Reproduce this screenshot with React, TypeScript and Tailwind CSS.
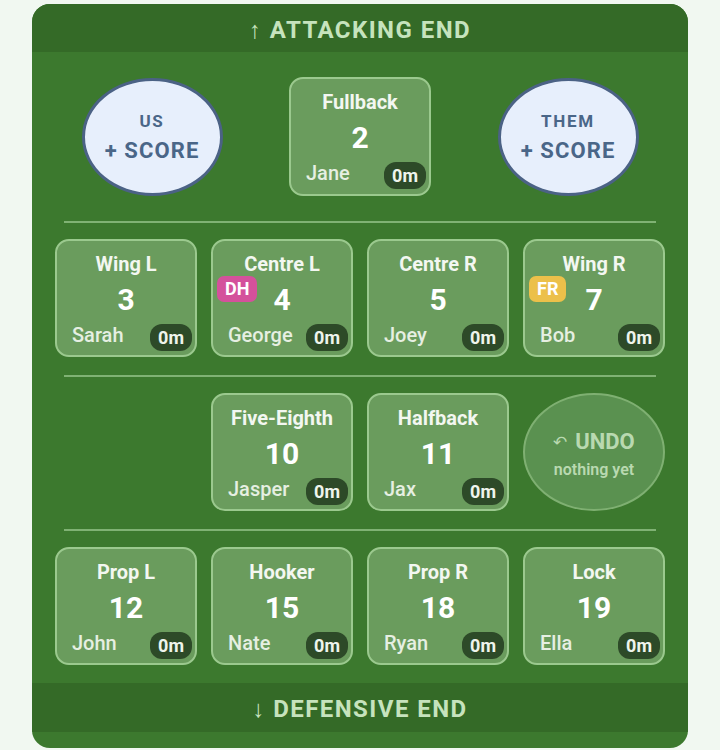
import React from "react";

type P = { title: string; num: number; name: string; tag?: "DH" | "FR" };

function Badge() {
  return (
    <div className="rounded-[12px] bg-[#2d4a28] px-[8px] text-[18px] font-bold leading-[27px] text-[#eef4ec]">0m</div>
  );
}

function Card({ title, num, name, tag }: P) {
  return (
    <div className="relative flex h-[118px] w-[142px] flex-col items-center rounded-[14px] border-2 border-[#9bc98e] bg-[#6a9c5d]">
      <div className="mt-[10px] text-[20px] font-bold leading-[26px] text-[#f3f7f1]">{title}</div>
      <div className="mt-[6px] text-[30px] font-bold leading-[34px] text-white">{num}</div>
      {tag && (
        <div
          className={
            tag === "DH"
              ? "absolute left-[4px] top-[35px] rounded-[7px] bg-[#d4519b] px-[8px] text-[18px] font-bold leading-[26px] text-white"
              : "absolute left-[4px] top-[35px] rounded-[7px] bg-[#ecc04a] px-[8px] text-[18px] font-bold leading-[26px] text-white"
          }
        >
          {tag}
        </div>
      )}
      <div className="mt-auto flex w-full items-center justify-between pb-[3px] pl-[15px] pr-[3px]">
        <div className="mb-[5px] text-[20px] font-medium leading-[24px] text-[#e6efe2]">{name}</div>
        <Badge />
      </div>
    </div>
  );
}

function Sep() {
  return <div className="mx-[9px] h-[2px] bg-[#80b274]" />;
}

function ScoreBtn({ label }: { label: string }) {
  return (
    <div className="flex h-[118px] w-[141px] flex-col items-center justify-center rounded-[50%] border-[3px] border-[#4b6285] bg-[#e7effc] text-[#4a6688]">
      <div className="text-[17px] font-bold leading-[22px] tracking-[0.1em]">{label}</div>
      <div className="mt-[6px] text-[22px] font-bold leading-[26px] tracking-[0.05em]">+ SCORE</div>
    </div>
  );
}

export default function App() {
  return (
    <div
      className="min-h-[750px] bg-[#f1f8f1] pt-[4px]"
      style={{ fontFamily: "Roboto, 'Noto Sans', sans-serif" }}
    >
      <div className="mx-[32px] w-[656px] overflow-hidden rounded-[18px] bg-[#3c792e]">
        <div className="flex h-[48px] items-center justify-center bg-[#346a27] pt-[3px] text-[24px] font-bold tracking-[0.06em] text-[#c6e3bd]">
          ↑ ATTACKING END
        </div>
        <div className="px-[23px]">
          <div className="mt-[25px] grid grid-cols-3 gap-[14px]">
            <div className="flex items-center justify-center">
              <ScoreBtn label="US" />
            </div>
            <div className="flex items-center justify-center">
              <div className="relative flex h-[119px] w-[142px] flex-col items-center rounded-[14px] border-2 border-[#9bc98e] bg-[#6a9c5d]">
                <div className="mt-[10px] text-[20px] font-bold leading-[26px] text-[#f3f7f1]">Fullback</div>
                <div className="mt-[6px] text-[30px] font-bold leading-[34px] text-white">2</div>
                <div className="mt-auto flex w-full items-center justify-between pb-[4px] pl-[15px] pr-[3px]">
                  <div className="mb-[5px] text-[20px] font-medium leading-[24px] text-[#e6efe2]">Jane</div>
                  <Badge />
                </div>
              </div>
            </div>
            <div className="flex items-center justify-center">
              <ScoreBtn label="THEM" />
            </div>
          </div>
          <div className="mt-[25px] mb-[16px]">
            <Sep />
          </div>
          <div className="grid grid-cols-4 gap-[14px]">
            <Card title="Wing L" num={3} name="Sarah" />
            <Card title="Centre L" num={4} name="George" tag="DH" />
            <Card title="Centre R" num={5} name="Joey" />
            <Card title="Wing R" num={7} name="Bob" tag="FR" />
          </div>
          <div className="mt-[18px] mb-[16px]">
            <Sep />
          </div>
          <div className="grid grid-cols-4 gap-[14px]">
            <div />
            <Card title="Five-Eighth" num={10} name="Jasper" />
            <Card title="Halfback" num={11} name="Jax" />
            <div className="flex h-[118px] w-[142px] flex-col items-center justify-center rounded-[50%] border-2 border-[#7fb072] bg-[#5a9150] pt-[5px] text-[#b9d9b0]">
              <div className="flex items-center text-[22px] font-bold leading-[26px]">
                <span className="mr-[8px] text-[17px] font-normal">↶</span>UNDO
              </div>
              <div className="mt-[5px] text-[16px] font-semibold leading-[20px]">nothing yet</div>
            </div>
          </div>
          <div className="mt-[18px] mb-[16px]">
            <Sep />
          </div>
          <div className="grid grid-cols-4 gap-[14px]">
            <Card title="Prop L" num={12} name="John" />
            <Card title="Hooker" num={15} name="Nate" />
            <Card title="Prop R" num={18} name="Ryan" />
            <Card title="Lock" num={19} name="Ella" />
          </div>
        </div>
        <div className="mt-[18px] flex h-[49px] items-center justify-center bg-[#346a27] pt-[2px] text-[24px] font-bold tracking-[0.06em] text-[#c6e3bd]">
          ↓ DEFENSIVE END
        </div>
        <div className="h-[16px]" />
      </div>
    </div>
  );
}
